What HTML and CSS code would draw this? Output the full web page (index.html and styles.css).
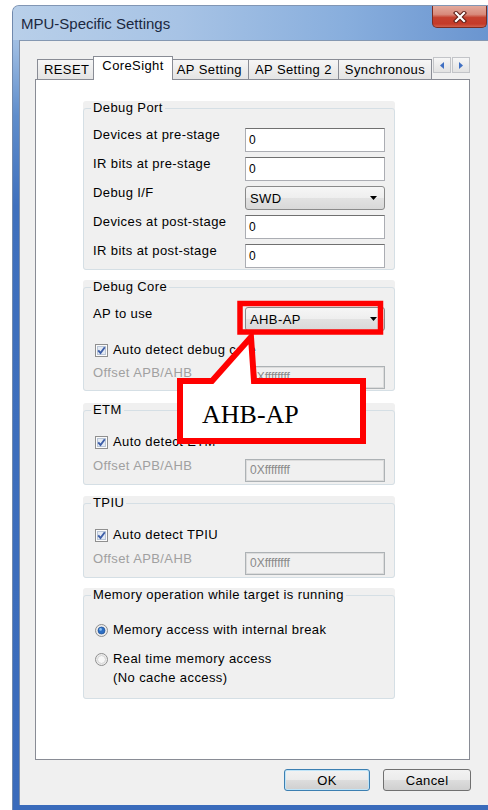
FILE: index.html
```html
<!DOCTYPE html>
<html lang="en">
<head>
<meta charset="utf-8">
<title>MPU-Specific Settings</title>
<link rel="stylesheet" href="styles.css">
</head>
<body>
<div class="window">
  <div class="titlebar">
    <span class="title">MPU-Specific Settings</span>
    <button class="close" aria-label="Close">
      <svg viewBox="0 0 16 12" width="16" height="12"><path class="x-out" d="M4 2 L12 10 M12 2 L4 10"/><path class="x-in" d="M4 2 L12 10 M12 2 L4 10"/></svg>
    </button>
  </div>
  <div class="frame">
    <div class="client">
      <div class="tabs">
        <div class="tab">RESET</div>
        <div class="tab active">CoreSight</div>
        <div class="tab">AP Setting</div>
        <div class="tab">AP Setting 2</div>
        <div class="tab">Synchronous</div>
        <div class="tab-scroll">
          <span class="spin"><svg viewBox="0 0 4 7" width="4" height="7"><path d="M4 0 V7 L0 3.5 Z"/></svg></span>
          <span class="spin"><svg viewBox="0 0 4 7" width="4" height="7"><path d="M0 0 V7 L4 3.5 Z"/></svg></span>
        </div>
      </div>

      <div class="panel">
        <div class="group g-port">
          <fieldset>
            <legend>Debug Port</legend>
            <div class="row"><label>Devices at pre-stage</label><div class="edit">0</div></div>
            <div class="row"><label>IR bits at pre-stage</label><div class="edit">0</div></div>
            <div class="row"><label>Debug I/F</label><div class="combo"><span>SWD</span><svg class="drop" viewBox="0 0 7 4" width="7" height="4"><path d="M0 0 H7 L3.5 4 Z"/></svg></div></div>
            <div class="row"><label>Devices at post-stage</label><div class="edit">0</div></div>
            <div class="row"><label>IR bits at post-stage</label><div class="edit">0</div></div>
          </fieldset>
        </div>

        <div class="group g-core">
          <fieldset>
            <legend>Debug Core</legend>
            <div class="row"><label>AP to use</label><div class="combo"><span>AHB-AP</span><svg class="drop" viewBox="0 0 7 4" width="7" height="4"><path d="M0 0 H7 L3.5 4 Z"/></svg></div></div>
            <div class="check">
              <svg class="box" viewBox="0 0 13 13" width="13" height="13"><rect class="box-frame" x="0.5" y="0.5" width="12" height="12"/><rect class="box-well" x="2.5" y="2.5" width="8" height="8"/><path class="box-tick" d="M3.2 6.4 L5.5 9 L9.8 3.3"/></svg>
              <span>Auto detect debug core</span>
            </div>
            <div class="row off"><label>Offset APB/AHB</label><div class="edit disabled">0Xffffffff</div></div>
          </fieldset>
        </div>

        <div class="group g-etm">
          <fieldset>
            <legend>ETM</legend>
            <div class="check">
              <svg class="box" viewBox="0 0 13 13" width="13" height="13"><rect class="box-frame" x="0.5" y="0.5" width="12" height="12"/><rect class="box-well" x="2.5" y="2.5" width="8" height="8"/><path class="box-tick" d="M3.2 6.4 L5.5 9 L9.8 3.3"/></svg>
              <span>Auto detect ETM</span>
            </div>
            <div class="row off"><label>Offset APB/AHB</label><div class="edit disabled">0Xffffffff</div></div>
          </fieldset>
        </div>

        <div class="group g-tpiu">
          <fieldset>
            <legend>TPIU</legend>
            <div class="check">
              <svg class="box" viewBox="0 0 13 13" width="13" height="13"><rect class="box-frame" x="0.5" y="0.5" width="12" height="12"/><rect class="box-well" x="2.5" y="2.5" width="8" height="8"/><path class="box-tick" d="M3.2 6.4 L5.5 9 L9.8 3.3"/></svg>
              <span>Auto detect TPIU</span>
            </div>
            <div class="row off"><label>Offset APB/AHB</label><div class="edit disabled">0Xffffffff</div></div>
          </fieldset>
        </div>

        <div class="group g-mem">
          <fieldset>
            <legend>Memory operation while target is running</legend>
            <div class="check radio">
              <svg viewBox="0 0 13 13" width="13" height="13"><circle class="rb-ring" cx="6.5" cy="6.5" r="6"/><circle class="rb-dot" cx="6.5" cy="6.5" r="3.5"/><circle class="rb-shine" cx="5.6" cy="5.4" r="1.3"/></svg>
              <span>Memory access with internal break</span>
            </div>
            <div class="check radio second">
              <svg viewBox="0 0 13 13" width="13" height="13"><circle class="rb-ring" cx="6.5" cy="6.5" r="6"/><circle class="rb-well" cx="6.5" cy="6.5" r="4"/></svg>
              <span>Real time memory access</span>
            </div>
            <div class="note">(No cache access)</div>
          </fieldset>
        </div>
      </div>

      <div class="actions">
        <button class="btn default">OK</button>
        <button class="btn">Cancel</button>
      </div>
    </div>
  </div>
</div>

<svg class="callout" viewBox="0 0 488 810" width="488" height="810">
  <rect class="mark" x="240" y="303.5" width="140.5" height="28.5"/>
  <path class="bubble" d="M180 381 H212 L251 337 L254 381 H363 V441 H180 Z"/>
  <text class="bubble-text" x="202" y="423">AHB-AP</text>
</svg>
</body>
</html>
```

FILE: styles.css
```css
* { box-sizing: border-box; }

html, body { margin: 0; padding: 0; }

body {
  position: relative;
  width: 488px;
  height: 810px;
  overflow: hidden;
  background: #fff;
  font-family: "Liberation Sans", Arial, sans-serif;
  font-size: 13px;
  letter-spacing: 0.4px;
  color: #000;
}

/* ---------- window chrome ---------- */
.window {
  margin: 5px 0 0 12px;
  width: 476px;
  height: 805px;
  display: flex;
  flex-direction: column;
  border-top: 1px solid #8196b4;
  border-left: 1px solid #7089ad;
  border-radius: 7px 0 0 0;
  overflow: hidden;
  background: linear-gradient(to bottom, #b2cae6 0px, #9dbce2 40px, #5f8dcb 110px, #3f70bd 200px, #3a6bbb 100%);
}

.titlebar {
  height: 34px;
  flex: none;
  display: flex;
  align-items: center;
  padding-left: 8px;
  background: linear-gradient(to right, #b8cfe9 0%, #a7c3e5 35%, #88aedd 70%, #6a95d0 100%);
}

.title {
  font-size: 15px;
  letter-spacing: 0;
  color: #1b2840;
}

.close {
  margin-left: auto;
  margin-right: 1px;
  align-self: flex-start;
  width: 55px;
  height: 22px;
  padding: 0;
  border: 1px solid #7a2c22;
  border-top: 0;
  border-radius: 0 0 5px 5px;
  background: linear-gradient(to bottom, #e3a99c 0%, #d88a7b 40%, #c5412f 55%, #c43a28 85%, #d0604c 100%);
  display: flex;
  align-items: center;
  justify-content: center;
}

.x-out { fill: none; stroke: #5c1d15; stroke-width: 4.2; stroke-linecap: square; }
.x-in { fill: none; stroke: #fff; stroke-width: 2.2; stroke-linecap: square; }

.frame {
  flex: 1;
  display: flex;
  padding: 0 0 5px 6px;
}

.client {
  flex: 1;
  display: flex;
  flex-direction: column;
  background: #f0f0f0;
  border-top: 1px solid #8598b2;
  border-left: 1px solid #7d8ea8;
  padding: 15px 18px 0 15px;
}

/* ---------- tab strip ---------- */
.tabs {
  display: flex;
  align-items: flex-end;
  height: 24px;
  margin: 0 0 -1px 2px;
  position: relative;
  z-index: 1;
}

.tab {
  height: 20px;
  margin-bottom: 1px;
  margin-left: -1px;
  padding: 0 6px;
  border: 1px solid #898c95;
  border-bottom: 0;
  background: linear-gradient(to bottom, #f6f6f6, #e4e4e4);
  line-height: 19px;
  white-space: nowrap;
}

.tab:first-child { margin-left: 0; }

.tab.active {
  position: relative;
  z-index: 1;
  height: 24px;
  margin: 0 -2px 0 -3px;
  padding: 0 8px;
  background: #fff;
  line-height: 18px;
}

.tab-scroll {
  align-self: flex-start;
  margin: 1px 0 0 1px;
  display: flex;
  gap: 1px;
}

.spin {
  width: 18px;
  height: 16px;
  border: 1px solid #c2c4c8;
  background: linear-gradient(to bottom, #f6f6f6, #e2e2e2);
  display: flex;
  align-items: center;
  justify-content: center;
}

.spin path { fill: #3f6fc2; }

.panel {
  flex: 1;
  background: #fff;
  border: 1px solid #898c95;
  padding: 21px 0 0 47px;
}

/* ---------- group boxes ---------- */
.group {
  width: 312px;
  background: #f0f0f0;
  border-radius: 3px;
}

.g-core { margin-top: 10px; }
.g-etm { margin-top: 12px; }
.g-tpiu { margin-top: 11px; }
.g-mem { margin-top: 10px; }

fieldset {
  margin: 0;
  min-width: 0;
  border: 1px solid #d5dfe5;
  border-radius: 3px;
  padding: 13px 9px 1px 9px;
}

legend {
  margin-left: -2px;
  padding: 0 2px;
  line-height: 14px;
}

.g-core fieldset { padding-bottom: 1px; }
.g-etm fieldset,
.g-tpiu fieldset { padding-top: 17px; padding-bottom: 2px; }
.g-mem fieldset { padding-top: 20px; padding-bottom: 13px; }

.row {
  display: flex;
  align-items: flex-start;
}

.row + .row { margin-top: 5px; }

.row label {
  width: 152px;
  flex: none;
  line-height: 14px;
  white-space: nowrap;
}

.row.off { margin-top: 8px; }
.g-etm .row.off,
.g-tpiu .row.off { margin-top: 9px; }
.row.off label { color: #a0a0a0; }

.edit {
  width: 140px;
  height: 24px;
  border: 1px solid #abadb3;
  border-top-color: #707070;
  background: #fff;
  padding-left: 3px;
  line-height: 22px;
  font-size: 12px;
  letter-spacing: 0;
}

.edit.disabled {
  height: 23px;
  border: 1px solid #adb2b5;
  box-shadow: inset 0 0 0 1px #dcdcdc;
  background: #f0f0f0;
  color: #8a8a8a;
  padding-left: 4px;
  line-height: 21px;
}

.combo {
  width: 140px;
  height: 24px;
  display: flex;
  align-items: center;
  padding: 0 7px 0 4px;
  border: 1px solid #8a8a8a;
  border-radius: 3px;
  background: linear-gradient(to bottom, #f6f6f6 0%, #eeeeee 50%, #e2e2e2 51%, #d8d8d8 100%);
  font-size: 13px;
}

.drop { margin-left: auto; }
.drop path { fill: #000; }

/* check boxes and radio buttons */
.check {
  display: flex;
  align-items: center;
  gap: 5px;
  height: 16px;
  margin-left: 2px;
  line-height: 16px;
  white-space: nowrap;
}

.check svg { flex: none; }

.g-core .check { margin-top: 11px; }
.radio.second { margin-top: 13px; }

.box-frame { fill: #fbfbfb; stroke: #8f8f8f; }
.box-well { fill: #e4eaf3; stroke: #b9c5d6; }
.box-tick { fill: none; stroke: #3d5ea8; stroke-width: 1.9; }

.rb-ring { fill: #ececec; stroke: #8f8f8f; }
.rb-dot { fill: #2d6fc4; stroke: #1d4d92; stroke-width: 0.7; }
.rb-shine { fill: #8cc0f2; }
.rb-well { fill: #f7f7f7; stroke: #d4d4d4; }

.note {
  margin-top: 4px;
  padding-left: 20px;
  line-height: 14px;
}

/* ---------- dialog buttons ---------- */
.actions {
  display: flex;
  justify-content: flex-end;
  gap: 13px;
  margin: 9px -1px 14px 0;
}

.btn {
  width: 88px;
  height: 22px;
  padding: 0;
  border: 1px solid #707070;
  border-radius: 3px;
  background: linear-gradient(to bottom, #f2f2f2 0%, #ebebeb 50%, #dddddd 51%, #cfcfcf 100%);
  font-family: inherit;
  font-size: 13px;
  letter-spacing: 0.4px;
  color: #000;
}

.btn.default {
  width: 86px;
  border-color: #3c7fb1;
  box-shadow: inset 0 0 0 1px #bfe4f8;
}

/* ---------- annotation overlay ---------- */
.callout {
  position: absolute;
  left: 0;
  top: 0;
  pointer-events: none;
}

.mark { fill: none; stroke: #ff0000; stroke-width: 5.5; }

.bubble {
  fill: #fff;
  stroke: #ff0000;
  stroke-width: 6;
  stroke-linejoin: miter;
}

.bubble-text {
  font-family: "Liberation Serif", "Times New Roman", serif;
  font-size: 26px;
  letter-spacing: 0;
  fill: #000;
}
```
